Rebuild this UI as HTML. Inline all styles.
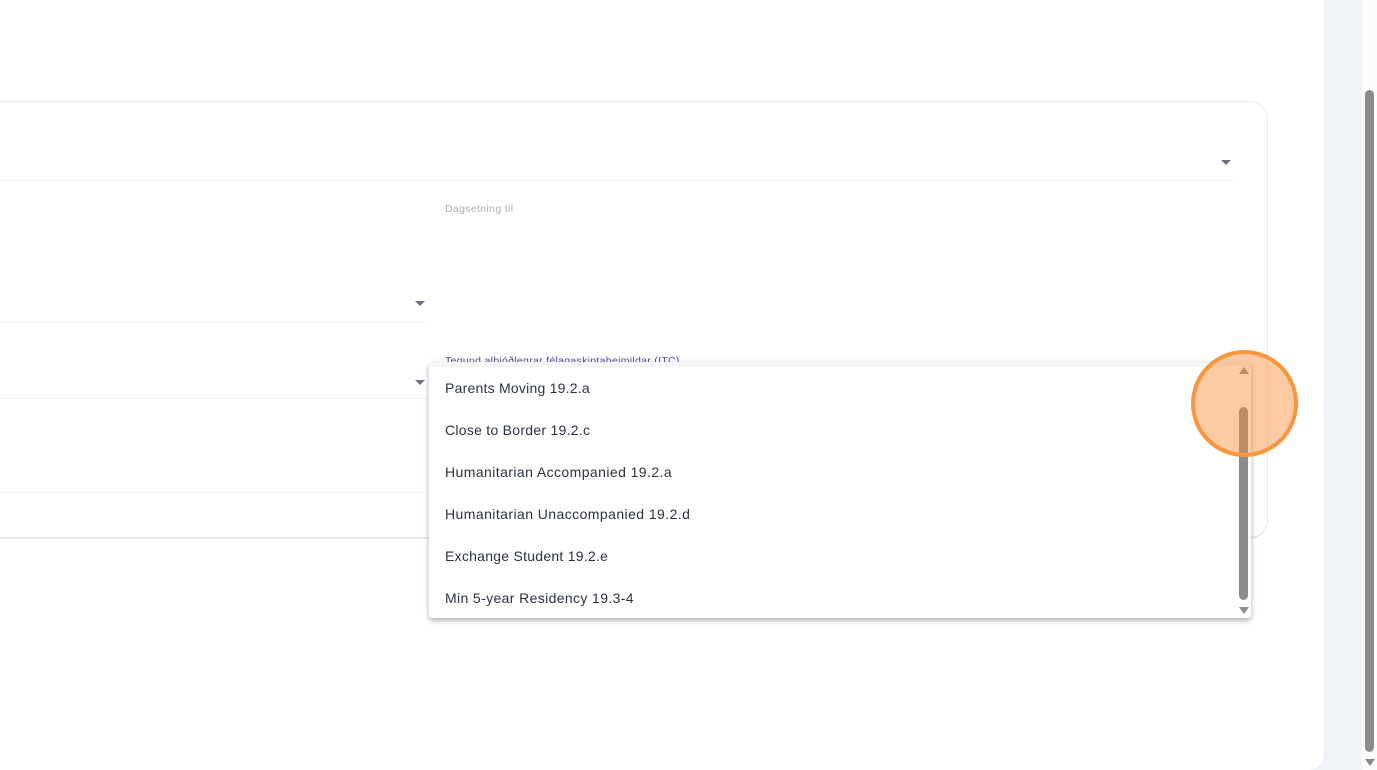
<!DOCTYPE html>
<html lang="is">
<head>
<meta charset="utf-8">
<title>Dropdown</title>
<style>
*{box-sizing:border-box}
html,body{margin:0;padding:0;width:1377px;height:770px;overflow:hidden;background:#fff;font-family:"Liberation Sans",sans-serif}
.abs{position:absolute}
#bg{left:0;top:0;width:1362px;height:770px;background:#f0f3f8}
#main{left:-20px;top:-20px;width:1345px;height:790px;background:#fff;border-right:1px solid #eceef2;border-bottom-right-radius:16px}
#sb{left:1362px;top:0;width:15px;height:770px;background:#fbfbfb}
#thumb{left:1365px;top:90px;width:9px;height:662px;background:#8c8c8c;border-radius:5px}
#card{left:-30px;top:101px;width:1298px;height:438px;background:#fff;border:1px solid #eaecf0;border-bottom:2px solid #e6e7ea;border-radius:18px}
.line{height:1px;background:#f3f4f6}
.tri{width:0;height:0;border-left:5px solid transparent;border-right:5px solid transparent;border-top:5px solid #6b7280}
.tri.up{border-top:0;border-bottom:7px solid #8c8c8c}
.tri.dn{border-top:7px solid #8c8c8c}
#l1{left:445px;top:202px;font-size:10.5px;line-height:13px;color:#a9adb3;letter-spacing:.34px;white-space:nowrap;top:203px}
#l2{left:445px;top:355px;font-size:10.5px;line-height:13px;color:#5546b0;letter-spacing:.3px;white-space:nowrap}
#dd{left:429px;top:362px;width:822px;height:256px;background:#fff;border-radius:3px;box-shadow:0 3px 5px rgba(0,0,0,.22),0 1px 8px rgba(0,0,0,.1)}
#strip{left:429px;top:362px;width:822px;height:5px;background:#f5f5f6}
.it{position:absolute;left:445px;font-size:14px;line-height:20px;color:#2b3240;white-space:nowrap}
#dthumb{left:1239px;top:407px;width:9px;height:193px;background:#8c8c8c;border-radius:5px}
#circle{left:1191px;top:350px;width:107px;height:107px;border-radius:50%;border:4px solid #f9953a;background:rgba(250,140,50,.45)}
</style>
</head>
<body>
<div id="bg" class="abs"></div>
<div id="main" class="abs"></div>
<div id="sb" class="abs"></div>
<div id="thumb" class="abs"></div>
<div class="abs tri dn" style="left:1365px;top:759px"></div>

<div id="card" class="abs"></div>
<div class="abs line" style="left:0;top:180px;width:1235px"></div>
<div class="abs line" style="left:0;top:322px;width:428px"></div>
<div class="abs line" style="left:0;top:398px;width:428px"></div>
<div class="abs line" style="left:0;top:492px;width:428px"></div>
<div class="abs tri" style="left:1221px;top:160px"></div>
<div class="abs tri" style="left:415px;top:301px"></div>
<div class="abs tri" style="left:415px;top:380px"></div>
<div id="l1" class="abs">Dagsetning til</div>
<div id="l2" class="abs">Tegund alþjóðlegrar félagaskiptaheimildar (ITC)</div>

<div id="dd" class="abs"></div>
<div id="strip" class="abs"></div>
<div class="it" style="top:378px;letter-spacing:.23px">Parents Moving 19.2.a</div>
<div class="it" style="top:420px;letter-spacing:.27px">Close to Border 19.2.c</div>
<div class="it" style="top:462px;letter-spacing:.42px">Humanitarian Accompanied 19.2.a</div>
<div class="it" style="top:504px;letter-spacing:.43px">Humanitarian Unaccompanied 19.2.d</div>
<div class="it" style="top:546px;letter-spacing:.26px">Exchange Student 19.2.e</div>
<div class="it" style="top:588px;letter-spacing:.37px">Min 5-year Residency 19.3-4</div>
<div id="dthumb" class="abs"></div>
<div class="abs tri up" style="left:1239px;top:367px"></div>
<div class="abs tri dn" style="left:1239px;top:607px"></div>
<div id="circle" class="abs"></div>
</body>
</html>
